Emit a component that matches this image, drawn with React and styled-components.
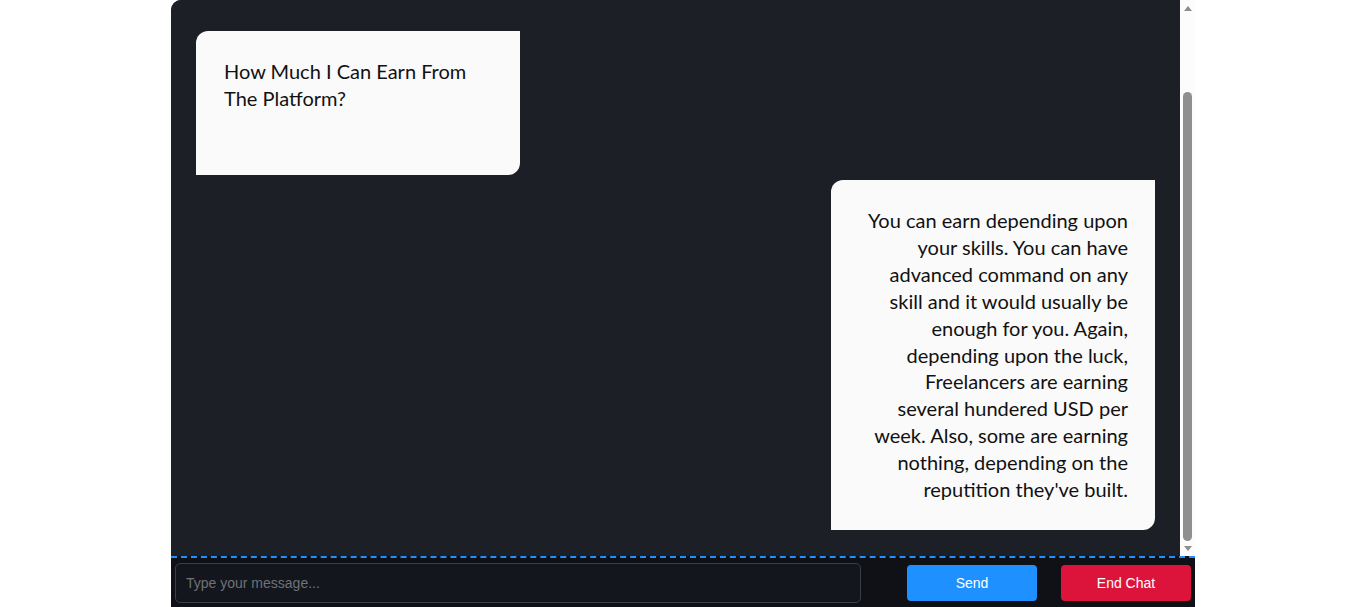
import React, { useEffect, useRef, useState } from "react";
import styled, { createGlobalStyle } from "styled-components";

const GlobalStyle = createGlobalStyle`
  html, body {
    margin: 0;
    padding: 0;
    background: #ffffff;
  }
  * {
    box-sizing: border-box;
  }
`;

const messages = [
  {
    id: 1,
    from: "user",
    text: "How Much I Can Earn From The Platform?",
  },
  {
    id: 2,
    from: "bot",
    text: "You can earn depending upon your skills. You can have advanced command on any skill and it would usually be enough for you. Again, depending upon the luck, Freelancers are earning several hundered USD per week. Also, some are earning nothing, depending on the reputition they've built.",
  },
];

const ARROW_SIZE = 15;

export default function App() {
  const listRef = useRef(null);
  const [thumb, setThumb] = useState({ top: 0, height: 0 });

  const measure = () => {
    const el = listRef.current;
    if (!el) return;
    const track = el.clientHeight - ARROW_SIZE * 2;
    const ratio = el.clientHeight / el.scrollHeight;
    setThumb({
      top: (track * el.scrollTop) / el.scrollHeight,
      height: track * ratio,
    });
  };

  useEffect(() => {
    if (listRef.current) {
      listRef.current.scrollTop = listRef.current.scrollHeight;
    }
    measure();
  }, []);

  return (
    <>
      <GlobalStyle />
      <ChatWindow>
        <ChatBody>
          <MessageList ref={listRef} onScroll={measure}>
            {messages.map((m) => (
              <Bubble key={m.id} $mine={m.from === "bot"}>
                {m.text}
              </Bubble>
            ))}
          </MessageList>
          <ScrollRail>
            <RailArrow $dir="up" />
            <RailTrack>
              <RailThumb
                style={{ marginTop: thumb.top, height: thumb.height }}
              />
            </RailTrack>
            <RailArrow $dir="down" />
          </ScrollRail>
        </ChatBody>
        <Composer>
          <MessageInput type="text" placeholder="Type your message..." />
          <ActionButton $color="#1e90ff" $gap="46px">
            Send
          </ActionButton>
          <ActionButton $color="#dc143c" $gap="24px">
            End Chat
          </ActionButton>
        </Composer>
      </ChatWindow>
    </>
  );
}

const ChatWindow = styled.div`
  width: 1024px;
  height: 100vh;
  margin: 0 auto;
  display: flex;
  flex-direction: column;
  background: #1c1f26;
  border-top-left-radius: 10px;
  overflow: hidden;
`;

const ChatBody = styled.div`
  flex: 1;
  min-height: 0;
  display: flex;
`;

const MessageList = styled.div`
  flex: 1;
  min-width: 0;
  overflow-y: scroll;
  scrollbar-width: none;
  display: flex;
  flex-direction: column;
  gap: 5px;
  padding: 126px 25px 26px 25px;
  background: #1c1f26;

  &::-webkit-scrollbar {
    display: none;
  }
`;

const ScrollRail = styled.div`
  width: 15px;
  flex-shrink: 0;
  display: flex;
  flex-direction: column;
  background: #fcfcfc;
`;

const RailArrow = styled.div`
  height: ${ARROW_SIZE}px;
  display: flex;
  align-items: center;
  justify-content: center;

  &::before {
    content: "";
    width: 0;
    height: 0;
    border-left: 4.5px solid transparent;
    border-right: 4.5px solid transparent;
    ${({ $dir }) =>
      $dir === "up"
        ? "border-bottom: 5px solid #8d8d8d; margin-top: 1px;"
        : "border-top: 5px solid #8d8d8d; margin-bottom: 1px;"}
  }
`;

const RailTrack = styled.div`
  flex: 1;
  min-height: 0;
  display: flex;
  flex-direction: column;
  align-items: center;
`;

const RailThumb = styled.div`
  width: 9px;
  flex-shrink: 0;
  background: #8f8f8f;
  border-radius: 5px;
`;

const Bubble = styled.div`
  width: 324px;
  min-height: 144px;
  flex-shrink: 0;
  align-self: ${({ $mine }) => ($mine ? "flex-end" : "flex-start")};
  text-align: ${({ $mine }) => ($mine ? "right" : "left")};
  padding: 27px 27px 27px 28px;
  background: #fafafa;
  color: #111111;
  border-radius: 12px 0 12px 0;
  font-family: Lato, "Open Sans", sans-serif;
  font-size: 20px;
  line-height: 26.9px;
`;

const Composer = styled.div`
  flex-shrink: 0;
  height: 51px;
  display: flex;
  align-items: center;
  padding: 0 4px;
  background: #0f1116;
  border-top: 2px dashed #1e90ff;
`;

const MessageInput = styled.input`
  flex: 1;
  height: 40px;
  padding: 0 10px;
  background: #13161c;
  border: 1px solid #3b3e45;
  border-radius: 5px;
  color: #e0e0e0;
  font-family: "Liberation Sans", Arial, sans-serif;
  font-size: 14px;
  outline: none;

  &::placeholder {
    color: #6f7277;
  }
`;

const ActionButton = styled.button`
  width: 130px;
  height: 36px;
  margin-left: ${({ $gap }) => $gap};
  background: ${({ $color }) => $color};
  color: #ffffff;
  border: none;
  border-radius: 4px;
  font-family: "Liberation Sans", Arial, sans-serif;
  font-size: 14px;
  cursor: pointer;
`;
